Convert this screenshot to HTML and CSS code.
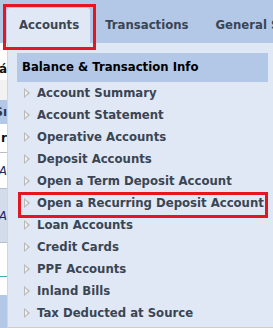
FILE: index.html
```html
<!DOCTYPE html>
<html lang="en">
<head>
    <meta charset="UTF-8">
    <meta name="viewport" content="width=device-width, initial-scale=1.0">
    <title>Accounts menu</title>
    <link rel="stylesheet" href="styles.css">
</head>
<body>

    <!-- TOP TABS -->
    <div class="top-bar">
        <div class="tab active marked">Accounts</div>
        <div class="tab">Transactions</div>
        <div class="tab">General Services</div>
    </div>

    <div class="main">
        <!-- page content under the dropdown -->
        <div class="page-strip">
            <div class="strip white" style="height: 14px"></div>
            <div class="strip white" style="height: 23px"><span class="dark">ná</span></div>
            <div class="strip grey" style="height: 20px"></div>
            <div class="strip blue" style="height: 24px"><span>Sı</span></div>
            <div class="strip white line" style="height: 29px"><span class="dark">r</span></div>
            <div class="strip white line" style="height: 36px"><span class="italic">A</span></div>
            <div class="strip pale line" style="height: 54px"><span class="italic">A</span></div>
            <div class="strip white teal" style="height: 34px"></div>
            <div class="strip white" style="height: 18px"></div>
            <div class="strip blue" style="height: 33px"></div>
        </div>

        <!-- DROPDOWN MENU -->
        <div class="menu">
            <div class="menu-title">Balance &amp; Transaction Info</div>
            <ul class="menu-list">
                <li><span class="arrow"></span>Account Summary</li>
                <li><span class="arrow"></span>Account Statement</li>
                <li><span class="arrow"></span>Operative Accounts</li>
                <li><span class="arrow"></span>Deposit Accounts</li>
                <li><span class="arrow"></span>Open a Term Deposit Account</li>
                <li class="marked"><span class="arrow"></span>Open a Recurring Deposit Account</li>
                <li><span class="arrow"></span>Loan Accounts</li>
                <li><span class="arrow"></span>Credit Cards</li>
                <li><span class="arrow"></span>PPF Accounts</li>
                <li><span class="arrow"></span>Inland Bills</li>
                <li><span class="arrow"></span>Tax Deducted at Source</li>
            </ul>
        </div>
    </div>

</body>
</html>
```

FILE: styles.css
```css
body {
    font-family: "DejaVu Sans", Verdana, sans-serif;
    font-weight: bold;
    font-size: 11.7px;
    margin: 0;
    width: 273px;
    height: 328px;
    overflow: hidden;
    background-color: #ffffff;
    color: #3a4553;
}
.top-bar {
    display: flex;
    gap: 3px;
    height: 43px;
    padding: 8px 0 0 7px;
    box-sizing: border-box;
    background-color: #b3c7e7;
    white-space: nowrap;
}
.tab {
    padding: 0 12px 0 12px;
    line-height: 35px;
    border-radius: 3px 3px 0 0;
    color: #3a4553;
}
.tab.active {
    padding: 0 11px 0 12px;
    background-color: #e1e8f5;
}
.marked {
    position: relative;
}
.tab.marked::after {
    content: "";
    position: absolute;
    left: -4px;
    top: -4px;
    right: -6px;
    bottom: -7px;
    border: 3px solid #e5161f;
}
.main {
    display: flex;
    height: 285px;
}
.page-strip {
    width: 7px;
    flex-shrink: 0;
    display: flex;
    flex-direction: column;
}
.strip {
    display: flex;
    justify-content: flex-end;
    align-items: center;
    overflow: hidden;
    box-sizing: border-box;
    font-size: 12px;
    color: #2a3a55;
}
.strip .dark {
    color: #111;
}
.strip .italic {
    font-style: italic;
    font-weight: normal;
    color: #1a2a66;
}
.white {
    background-color: #ffffff;
}
.grey {
    background-color: #f2f2f2;
}
.blue {
    background-color: #b3c7e7;
}
.pale {
    background-color: #d3dcea;
}
.line {
    border-bottom: 1px solid #b9bec6;
}
.teal {
    border-bottom: 1px solid #4aa7b8;
}
.menu {
    flex: 1;
    background-color: #e1e8f5;
    border-left: 1px solid #cdd6e4;
    border-bottom: 1px solid #cfcbc6;
    padding: 10px 5px 0 9px;
}
.menu-title {
    background-color: #b3c7e7;
    color: #000;
    height: 29px;
    line-height: 29px;
    padding-left: 5px;
    white-space: nowrap;
}
.menu-list {
    list-style: none;
    margin: 0;
    padding: 0;
}
.menu-list li {
    display: flex;
    align-items: center;
    height: 22px;
    padding-left: 7px;
    white-space: nowrap;
}
.menu-list li.marked::after {
    content: "";
    position: absolute;
    left: 1px;
    top: 0;
    right: 0;
    bottom: -4px;
    border: 3px solid #e5161f;
}
.arrow {
    width: 0;
    height: 0;
    margin-right: 7px;
    border-top: 5px solid transparent;
    border-bottom: 5px solid transparent;
    border-left: 6px solid #b9b9b9;
    position: relative;
}
.arrow::after {
    content: "";
    position: absolute;
    left: -5px;
    top: -3px;
    border-top: 3px solid transparent;
    border-bottom: 3px solid transparent;
    border-left: 3.5px solid #f1f1f1;
}
```
